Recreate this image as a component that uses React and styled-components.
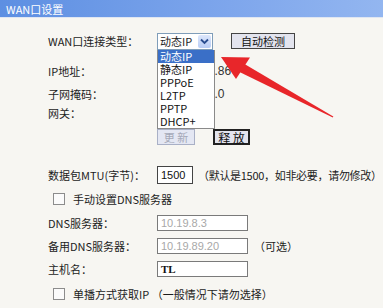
import React from 'react'
import styled, { createGlobalStyle } from 'styled-components'

const GlobalStyle = createGlobalStyle`
  html, body {
    margin: 0;
    padding: 0;
    background: #f7f6f2;
  }
  body {
    font-family: 'Noto Sans CJK SC', 'Liberation Sans', sans-serif;
    font-size: 11px;
    color: #1c1c1c;
  }
`

const OPTIONS = ['动态IP', '静态IP', 'PPPoE', 'L2TP', 'PPTP', 'DHCP+']

export default function App() {
  return (
    <Page>
      <GlobalStyle />
      <Header>WAN口设置</Header>

      <Form>
        <Row $h={24} $gap={11}>
          <Label>WAN口连接类型：</Label>
          <Field>
            <SelectWrap>
              <Select>
                <span>动态IP</span>
                <SelectButton>
                  <svg width="9" height="7" viewBox="0 0 9 7">
                    <path d="M1 1.5 L4.5 5 L8 1.5" fill="none" stroke="#2a4d8f" strokeWidth="1.8" />
                  </svg>
                </SelectButton>
              </Select>
              <DropList>
                {OPTIONS.map((o, i) => (
                  <Option key={o} $active={i === 0}>{o}</Option>
                ))}
              </DropList>
            </SelectWrap>
            <Button $w={64} $ml={18}>自动检测</Button>
          </Field>
        </Row>

        <Row $h={18} $gap={9}>
          <Label>IP地址：</Label>
          <Value>10.19.189.86</Value>
        </Row>
        <Row $h={18} $gap={5}>
          <Label>子网掩码：</Label>
          <Value>255.255.0.0</Value>
        </Row>
        <Row $h={18} $gap={1}>
          <Label>网关：</Label>
          <Value />
        </Row>
        <Row $h={18} $gap={6}>
          <span />
          <Field>
            <Button $w={38} $disabled>更 新</Button>
            <Button $w={37} $ml={18} $strong>释 放</Button>
          </Field>
        </Row>

        <Row $h={20} $gap={19}>
          <Label>数据包MTU(字节)：</Label>
          <Field>
            <Input $w={36} $h={18} $dark>1500</Input>
            <Note $ml={5} $tight>（默认是1500，如非必要，请勿修改）</Note>
          </Field>
        </Row>

        <CheckRow $gap={5}>
          <Box />
          <span>手动设置DNS服务器</span>
        </CheckRow>

        <Row $h={18} $gap={6}>
          <Label>DNS服务器：</Label>
          <Field>
            <Input $w={91} $muted>10.19.8.3</Input>
          </Field>
        </Row>
        <Row $h={18} $gap={5}>
          <Label>备用DNS服务器：</Label>
          <Field>
            <Input $w={91} $muted>10.19.89.20</Input>
            <Note $ml={6}>（可选）</Note>
          </Field>
        </Row>
        <Row $h={18} $gap={5}>
          <Label>主机名：</Label>
          <Field>
            <Input $w={91} $bold>TL</Input>
          </Field>
        </Row>

        <CheckRow $gap={7}>
          <Box />
          <span>单播方式获取IP （一般情况下请勿选择）</span>
        </CheckRow>
      </Form>

      <Arrow width="383" height="308" viewBox="0 0 383 308">
        <defs>
          <filter id="soft" x="-10%" y="-10%" width="120%" height="120%">
            <feGaussianBlur stdDeviation="0.5" />
          </filter>
        </defs>
        <g fill="#e8272b" filter="url(#soft)">
          <polygon points="221,57 250,57.5 236,79" />
          <polygon points="239.5,72 244.5,64 333.3,116.4 332.8,117.6" />
        </g>
      </Arrow>
    </Page>
  )
}

const Page = styled.div`
  position: relative;
  width: 383px;
  height: 308px;
  overflow: hidden;
  background: #f7f6f2;
`

const Header = styled.div`
  height: 17px;
  padding-left: 6px;
  display: flex;
  align-items: center;
  background: linear-gradient(to right, #5d8fe2, #7ea6ec 60%, #93b6f0);
  border-bottom: 1px solid #dfe6f2;
  color: #fff;
  font-size: 11px;
`

const Form = styled.div`
  padding-left: 48px;
  display: flex;
  flex-direction: column;
`

const Row = styled.div`
  display: grid;
  grid-template-columns: 109px 1fr;
  align-items: center;
  height: ${p => p.$h}px;
  margin-top: ${p => p.$gap}px;
`

const Label = styled.span`
  white-space: nowrap;
`

const Field = styled.div`
  display: flex;
  align-items: center;
`

const Value = styled.span`
  padding-left: 4px;
  font-family: 'Liberation Sans', sans-serif;
  font-size: 12px;
  color: #333;
`

const SelectWrap = styled.div`
  position: relative;
  z-index: 2;
`

const Select = styled.div`
  box-sizing: border-box;
  width: 56px;
  height: 17px;
  display: flex;
  align-items: center;
  justify-content: space-between;
  padding: 0 1px 0 2px;
  background: #fff;
  border: 1px solid #7f9db9;
`

const SelectButton = styled.span`
  width: 13px;
  height: 13px;
  display: flex;
  align-items: center;
  justify-content: center;
  background: linear-gradient(#dce6fb, #b9cdf5);
  border-radius: 2px;
`

const DropList = styled.div`
  position: absolute;
  top: 17px;
  left: 0;
  box-sizing: border-box;
  width: 58px;
  background: #fff;
  border: 1px solid #8a8a8a;
  border-top: 0;
`

const Option = styled.div`
  height: 13px;
  line-height: 13px;
  padding-left: 2px;
  background: ${p => (p.$active ? '#3a6fc7' : '#fff')};
  color: ${p => (p.$active ? '#fff' : '#111')};
`

const Button = styled.div`
  box-sizing: border-box;
  width: ${p => p.$w}px;
  height: 16px;
  margin-left: ${p => p.$ml || 0}px;
  display: flex;
  align-items: center;
  justify-content: center;
  background: ${p => (p.$disabled ? '#e4e7f3' : '#e3e4ee')};
  border: ${p => (p.$strong ? '2px solid #222' : p.$disabled ? '1px solid #a9b0c6' : '1px solid #444')};
  color: ${p => (p.$disabled ? '#a5a9b8' : '#111')};
  font-size: ${p => (p.$strong ? 12 : 11)}px;
`

const Input = styled.div`
  box-sizing: border-box;
  width: ${p => p.$w}px;
  height: ${p => p.$h || 16}px;
  padding-left: 3px;
  display: flex;
  align-items: center;
  background: #fff;
  border: 1px solid ${p => (p.$dark ? '#444' : '#7a7a7a')};
  font-family: ${p => (p.$bold ? "'Liberation Serif', serif" : "'Liberation Sans', sans-serif")};
  font-weight: ${p => (p.$bold ? 700 : 400)};
  color: ${p => (p.$muted ? '#a8a8a8' : '#111')};
  font-size: 11px;
`

const Note = styled.span`
  margin-left: ${p => p.$ml}px;
  white-space: nowrap;
  letter-spacing: ${p => (p.$tight ? '-0.3px' : 'normal')};
`

const CheckRow = styled.div`
  height: 18px;
  margin-top: ${p => p.$gap}px;
  padding-left: 5px;
  display: flex;
  align-items: center;
  gap: 8px;
`

const Box = styled.span`
  box-sizing: border-box;
  width: 12px;
  height: 12px;
  background: #fbfbfb;
  border: 1px solid #8c8c8c;
`

const Arrow = styled.svg`
  position: absolute;
  left: 0;
  top: 0;
  z-index: 3;
  pointer-events: none;
`
